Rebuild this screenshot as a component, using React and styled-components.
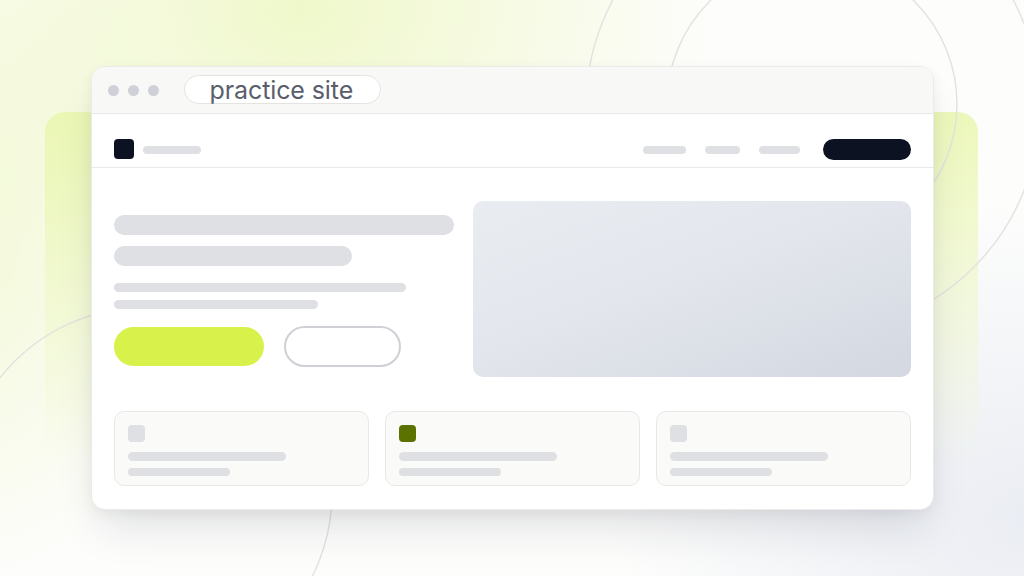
import React from "react";
import styled, { createGlobalStyle } from "styled-components";

const Global = createGlobalStyle`
  html, body { margin: 0; padding: 0; background: #ffffff; }
  body { font-family: Inter, "Noto Sans", sans-serif; }
`;

const Stage = styled.div`
  position: relative;
  width: 1024px;
  height: 576px;
  overflow: hidden;
  display: flex;
  align-items: center;
  justify-content: center;
  background:
    radial-gradient(ellipse 420px 300px at 300px 10px, rgba(236, 247, 190, 0.8), rgba(236, 247, 190, 0) 100%),
    radial-gradient(ellipse 260px 360px at -40px 230px, rgba(240, 248, 205, 0.8), rgba(240, 248, 205, 0) 100%),
    radial-gradient(ellipse 420px 320px at 1030px 520px, rgba(232, 235, 242, 0.9), rgba(232, 235, 242, 0) 100%),
    #fdfdfc;
`;

const LimePanel = styled.div`
  position: absolute;
  left: 45px;
  top: 112px;
  width: 933px;
  height: 400px;
  border-radius: 20px;
  background: linear-gradient(to bottom, rgba(232, 246, 170, 0.8) 0%, rgba(236, 247, 190, 0.5) 45%, rgba(240, 248, 210, 0) 88%);
`;

const Rings = styled.svg`
  position: absolute;
  left: 0;
  top: 0;
  width: 1024px;
  height: 576px;
  pointer-events: none;
`;

const Browser = styled.div`
  position: relative;
  width: 843px;
  height: 444px;
  box-sizing: border-box;
  border-radius: 14px;
  border: 1px solid #ebebe9;
  background: #ffffff;
  overflow: hidden;
  display: flex;
  flex-direction: column;
  box-shadow: 0 26px 44px -10px rgba(20, 28, 45, 0.13), 0 4px 14px rgba(20, 28, 45, 0.05);
`;

const TitleBar = styled.div`
  height: 46px;
  flex: none;
  display: flex;
  align-items: center;
  padding-left: 16px;
  background: #f8f8f6;
  border-bottom: 1px solid #e9e9e7;
`;

const Dots = styled.div`
  display: flex;
  gap: 9px;
  margin-right: 25px;
`;

const Dot = styled.span`
  width: 11px;
  height: 11px;
  border-radius: 50%;
  background: #cfd0d8;
`;

const UrlPill = styled.div`
  width: 197px;
  height: 29px;
  box-sizing: border-box;
  border: 1px solid #e3e3e1;
  border-radius: 999px;
  background: #ffffff;
  display: flex;
  align-items: flex-end;
  padding-left: 25px;
  margin-top: -1px;
`;

const UrlText = styled.span`
  font-family: Inter, "Noto Sans", sans-serif;
  font-size: 25px;
  line-height: 25px;
  color: #5a5e6c;
  letter-spacing: -0.1px;
  white-space: nowrap;
`;

const Nav = styled.div`
  flex: none;
  height: 54px;
  box-sizing: border-box;
  padding: 25px 22px 8px 22px;
  display: flex;
  align-items: flex-start;
  border-bottom: 1px solid #e9e9eb;
`;

const Logo = styled.div`
  width: 20px;
  height: 20px;
  border-radius: 4px;
  background: #0c1222;
  margin-right: 9px;
`;

const Bar = styled.div`
  width: ${(p) => p.$w}px;
  height: ${(p) => p.$h || 8}px;
  border-radius: 999px;
  background: #dfe0e4;
  flex: none;
`;

const NavLinks = styled.div`
  margin-left: auto;
  display: flex;
  align-items: center;
  gap: 19px;
  height: 21px;
`;

const NavButton = styled.div`
  width: 88px;
  height: 21px;
  border-radius: 999px;
  background: #0c1222;
  margin-left: 4px;
`;

const Body = styled.div`
  flex: 1;
  padding: 33px 22px 23px 22px;
  display: flex;
  flex-direction: column;
  gap: 34px;
`;

const Hero = styled.div`
  display: grid;
  grid-template-columns: 340px 1fr;
  gap: 19px;
  align-items: start;
`;

const HeroText = styled.div`
  display: flex;
  flex-direction: column;
  align-items: flex-start;
  margin-top: 14px;
`;

const HeroBar = styled(Bar)`
  margin-bottom: ${(p) => p.$mb || 0}px;
`;

const Buttons = styled.div`
  display: flex;
  gap: 20px;
  margin-top: 18px;
`;

const PrimaryBtn = styled.div`
  width: 150px;
  height: 39px;
  border-radius: 999px;
  background: #d9f24b;
`;

const GhostBtn = styled.div`
  width: 117px;
  height: 41px;
  box-sizing: border-box;
  border-radius: 999px;
  border: 2px solid #cfd0d6;
  background: #ffffff;
  margin-top: -1px;
`;

const HeroImage = styled.div`
  height: 176px;
  border-radius: 10px;
  background: linear-gradient(160deg, #e9ecf1 0%, #e3e6ec 45%, #d3d8e1 100%);
`;

const Cards = styled.div`
  display: grid;
  grid-template-columns: repeat(3, 1fr);
  gap: 16px;
`;

const Card = styled.div`
  height: 75px;
  box-sizing: border-box;
  padding: 13px 13px 9px 13px;
  border: 1px solid #e8e8e6;
  border-radius: 10px;
  background: #fafaf8;
  display: flex;
  flex-direction: column;
  align-items: flex-start;
`;

const CardIcon = styled.div`
  flex: none;
  width: 17px;
  height: 17px;
  border-radius: 4px;
  background: ${(p) => (p.$accent ? "#5b7100" : "#dfe0e4")};
  margin-bottom: 10px;
`;

const CardLine = styled(Bar)`
  margin-bottom: ${(p) => p.$mb || 0}px;
`;

export default function App() {
  const cards = [false, true, false];
  return (
    <>
      <Global />
      <Stage>
        <LimePanel />
        <Rings viewBox="0 0 1024 576">
          <g fill="none" stroke="#e2e2de" strokeWidth="1.4">
            <circle cx="812" cy="104" r="145" />
            <circle cx="813" cy="107" r="227" />
            <circle cx="146" cy="493" r="186" />
          </g>
        </Rings>
        <Browser>
          <TitleBar>
            <Dots>
              <Dot />
              <Dot />
              <Dot />
            </Dots>
            <UrlPill>
              <UrlText>practice site</UrlText>
            </UrlPill>
          </TitleBar>
          <Nav>
            <Logo />
            <Bar $w={58} style={{ marginTop: 7 }} />
            <NavLinks>
              <Bar $w={43} />
              <Bar $w={35} />
              <Bar $w={41} />
              <NavButton />
            </NavLinks>
          </Nav>
          <Body>
            <Hero>
              <HeroText>
                <HeroBar $w={340} $h={20} $mb={11} />
                <HeroBar $w={238} $h={20} $mb={17} />
                <HeroBar $w={292} $h={9} $mb={8} />
                <HeroBar $w={204} $h={9} />
                <Buttons>
                  <PrimaryBtn />
                  <GhostBtn />
                </Buttons>
              </HeroText>
              <HeroImage />
            </Hero>
            <Cards>
              {cards.map((accent, i) => (
                <Card key={i}>
                  <CardIcon $accent={accent} />
                  <CardLine $w={158} $h={9} $mb={7} />
                  <CardLine $w={102} $h={8} />
                </Card>
              ))}
            </Cards>
          </Body>
        </Browser>
      </Stage>
    </>
  );
}
